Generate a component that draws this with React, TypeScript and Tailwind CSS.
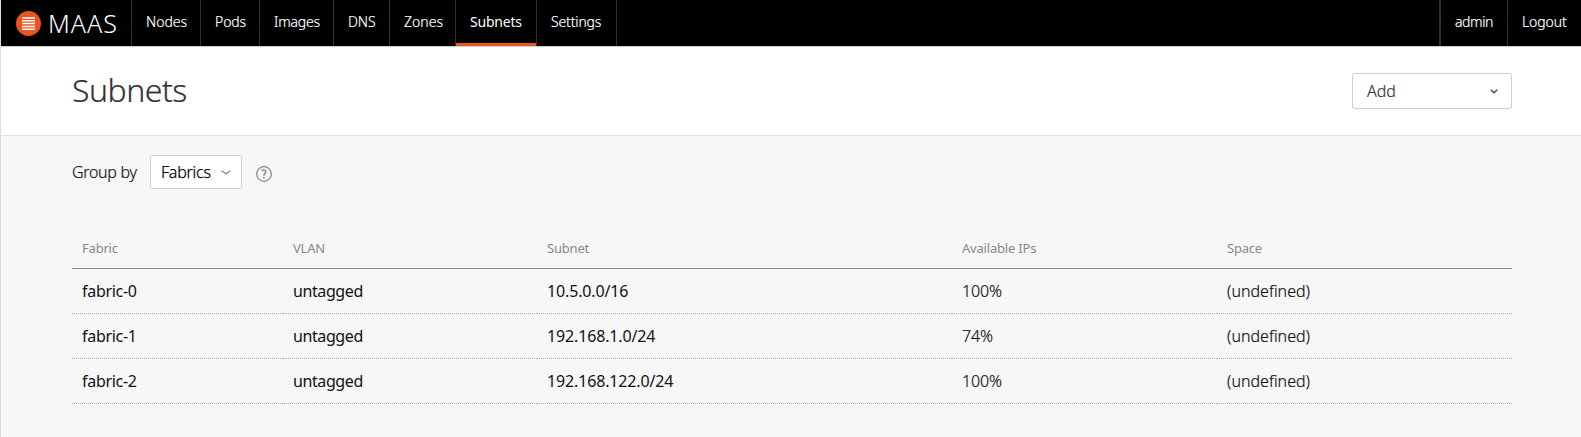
const NAV = [
  { label: "Nodes", cell: "w-[69px]" },
  { label: "Pods", cell: "w-[59px] tracking-[-0.1px]" },
  { label: "Images", cell: "w-[74px] tracking-[-0.2px]" },
  { label: "DNS", cell: "w-[56px] tracking-[-0.1px]" },
  { label: "Zones", cell: "w-[66px]" },
  { label: "Subnets", cell: "w-[81px] tracking-[-0.2px]", active: true },
  { label: "Settings", cell: "w-[80px] tracking-[-0.15px]" },
];

const ROWS = [
  { fabric: "fabric-0", vlan: "untagged", subnet: "10.5.0.0/16", available: "100%", space: "(undefined)" },
  { fabric: "fabric-1", vlan: "untagged", subnet: "192.168.1.0/24", available: "74%", space: "(undefined)" },
  { fabric: "fabric-2", vlan: "untagged", subnet: "192.168.122.0/24", available: "100%", space: "(undefined)" },
];

function Logo() {
  return (
    <svg width="25" height="25" viewBox="0 0 25 25" className="shrink-0">
      <circle cx="12.5" cy="12.5" r="12.5" fill="#e95420" />
      <path d="M6 7h13M6 9.8h13M6 12.6h13M6 15.4h13M6 18.200h13" stroke="#fff" strokeWidth="1.5" />
    </svg>
  );
}

function Header() {
  return (
    <header className="flex h-[47px] justify-between border-b border-[#cdcdcd] bg-black text-sm font-light text-white">
      <nav className="flex">
        <a className="flex w-[130px] items-center gap-[7px] pl-[15px]">
          <Logo />
          <span className="pb-px text-[25px] leading-[44px] tracking-[1px]">MAAS</span>
        </a>
        {NAV.map((n) => (
          <a
            key={n.label}
            className={`${n.cell} shrink-0 border-l border-[#333] pl-[14px] leading-[44px] ${n.active ? "font-normal" : "[-webkit-text-stroke:0.2px]"}`}
          >
            {n.active ? <span className="-ml-[14px] block h-[46px] border-b-[3px] border-[#e95420] pl-[14px]">{n.label}</span> : n.label}
          </a>
        ))}
        <span className="border-l border-[#333]" />
      </nav>
      <div className="flex leading-[44px] [-webkit-text-stroke:0.2px]">
        <a className="w-[68px] border-l-2 border-[#333] pl-[14px] tracking-[-0.4px]">admin</a>
        <a className="w-[74px] border-l border-[#333] pl-[14px] tracking-[-0.1px]">Logout</a>
      </div>
    </header>
  );
}

export default function App() {
  return (
    <div className="h-[437px] overflow-hidden border-l border-[#dcdcdc] bg-[#f7f7f7] font-['Noto_Sans',sans-serif] text-base font-light text-[#111]">
      <Header />
      <section className="flex h-[89px] items-start justify-between border-b border-[#e2e2e2] bg-white pr-[69px] pl-[71px]">
        <h1 className="pt-[21px] text-[32px] leading-[44px] tracking-[-0.5px] text-[#333] [-webkit-text-stroke:0.2px]">Subnets</h1>
        <button className="mt-[26px] flex h-9 w-40 items-center justify-between rounded-[2px] border border-[#cdcdcd] bg-white pr-[13px] pl-[14px] text-[#333]">
          <span className="[-webkit-text-stroke:0.2px]">Add</span>
          <svg width="8" height="5" viewBox="0 0 8 5" fill="none" stroke="#444" strokeWidth="1.3"><path d="M.7 .8L4 3.800 7.300 .8" /></svg>
        </button>
      </section>
      <main className="pr-[69px] pl-[71px]">
        <div className="flex h-[54px] items-start pt-[19px]">
          <label className="w-[66px] leading-[34px] tracking-[-0.3px] whitespace-nowrap [-webkit-text-stroke:0.2px]">Group by</label>
          <button className="ml-[12px] flex h-[34px] w-[92px] items-center rounded-[2px] border border-[#cdcdcd] bg-white pl-[10px] text-black">
            <span className="w-[60px] text-left tracking-[-0.25px] [-webkit-text-stroke:0.25px]">Fabrics</span>
            <svg width="10" height="5" viewBox="0 0 10 5" fill="none" stroke="#888" strokeWidth="1.3"><path d="M.5 .8Q2.500 1.500 5 3.800 7.500 1.500 9.500 .8" /></svg>
          </button>
          <svg width="16" height="16" viewBox="0 0 16 16" className="mt-[11px] ml-[14px]" fill="none" stroke="#888" strokeWidth="1.3">
            <circle cx="8" cy="8" r="7.300" />
            <path d="M5.700 4.700Q7.800 3.400 9.400 4.500C10.600 5.800 9.400 7 8.600 7.700Q7.800 8.400 7.900 9.700M7.900 10.900v1.600" strokeWidth="1.500" />
          </svg>
        </div>
        <table className="mt-[38px] w-[1440px] table-fixed border-separate border-spacing-0 text-left">
          <colgroup>
            <col className="w-[211px]" />
            <col className="w-[254px]" />
            <col className="w-[415px]" />
            <col className="w-[265px]" />
            <col className="w-[295px]" />
          </colgroup>
          <thead>
            <tr className="text-[13px] tracking-[-0.2px] text-[#888]">
              {["Fabric", "VLAN", "Subnet", "Available IPs", "Space"].map((h) => (
                <th key={h} className="h-[41px] border-b border-[#888] pt-[2px] pb-0 pl-[10px] font-normal">{h}</th>
              ))}
            </tr>
          </thead>
          <tbody className="[&_td]:h-[45px] [&_td]:border-b [&_td]:border-dotted [&_td]:border-[#aaa] [&_td]:pl-[10px]">
            {ROWS.map((r) => (
              <tr key={r.fabric}>
                <td className="font-normal tracking-[-0.3px]">{r.fabric}</td>
                <td className="font-normal tracking-[-0.4px]">{r.vlan}</td>
                <td className="font-normal tracking-[-0.15px]">{r.subnet}</td>
                <td className="tracking-[-0.1px] [-webkit-text-stroke:0.2px]">{r.available}</td>
                <td className="[-webkit-text-stroke:0.2px]">{r.space}</td>
              </tr>
            ))}
          </tbody>
        </table>
      </main>
    </div>
  );
}
